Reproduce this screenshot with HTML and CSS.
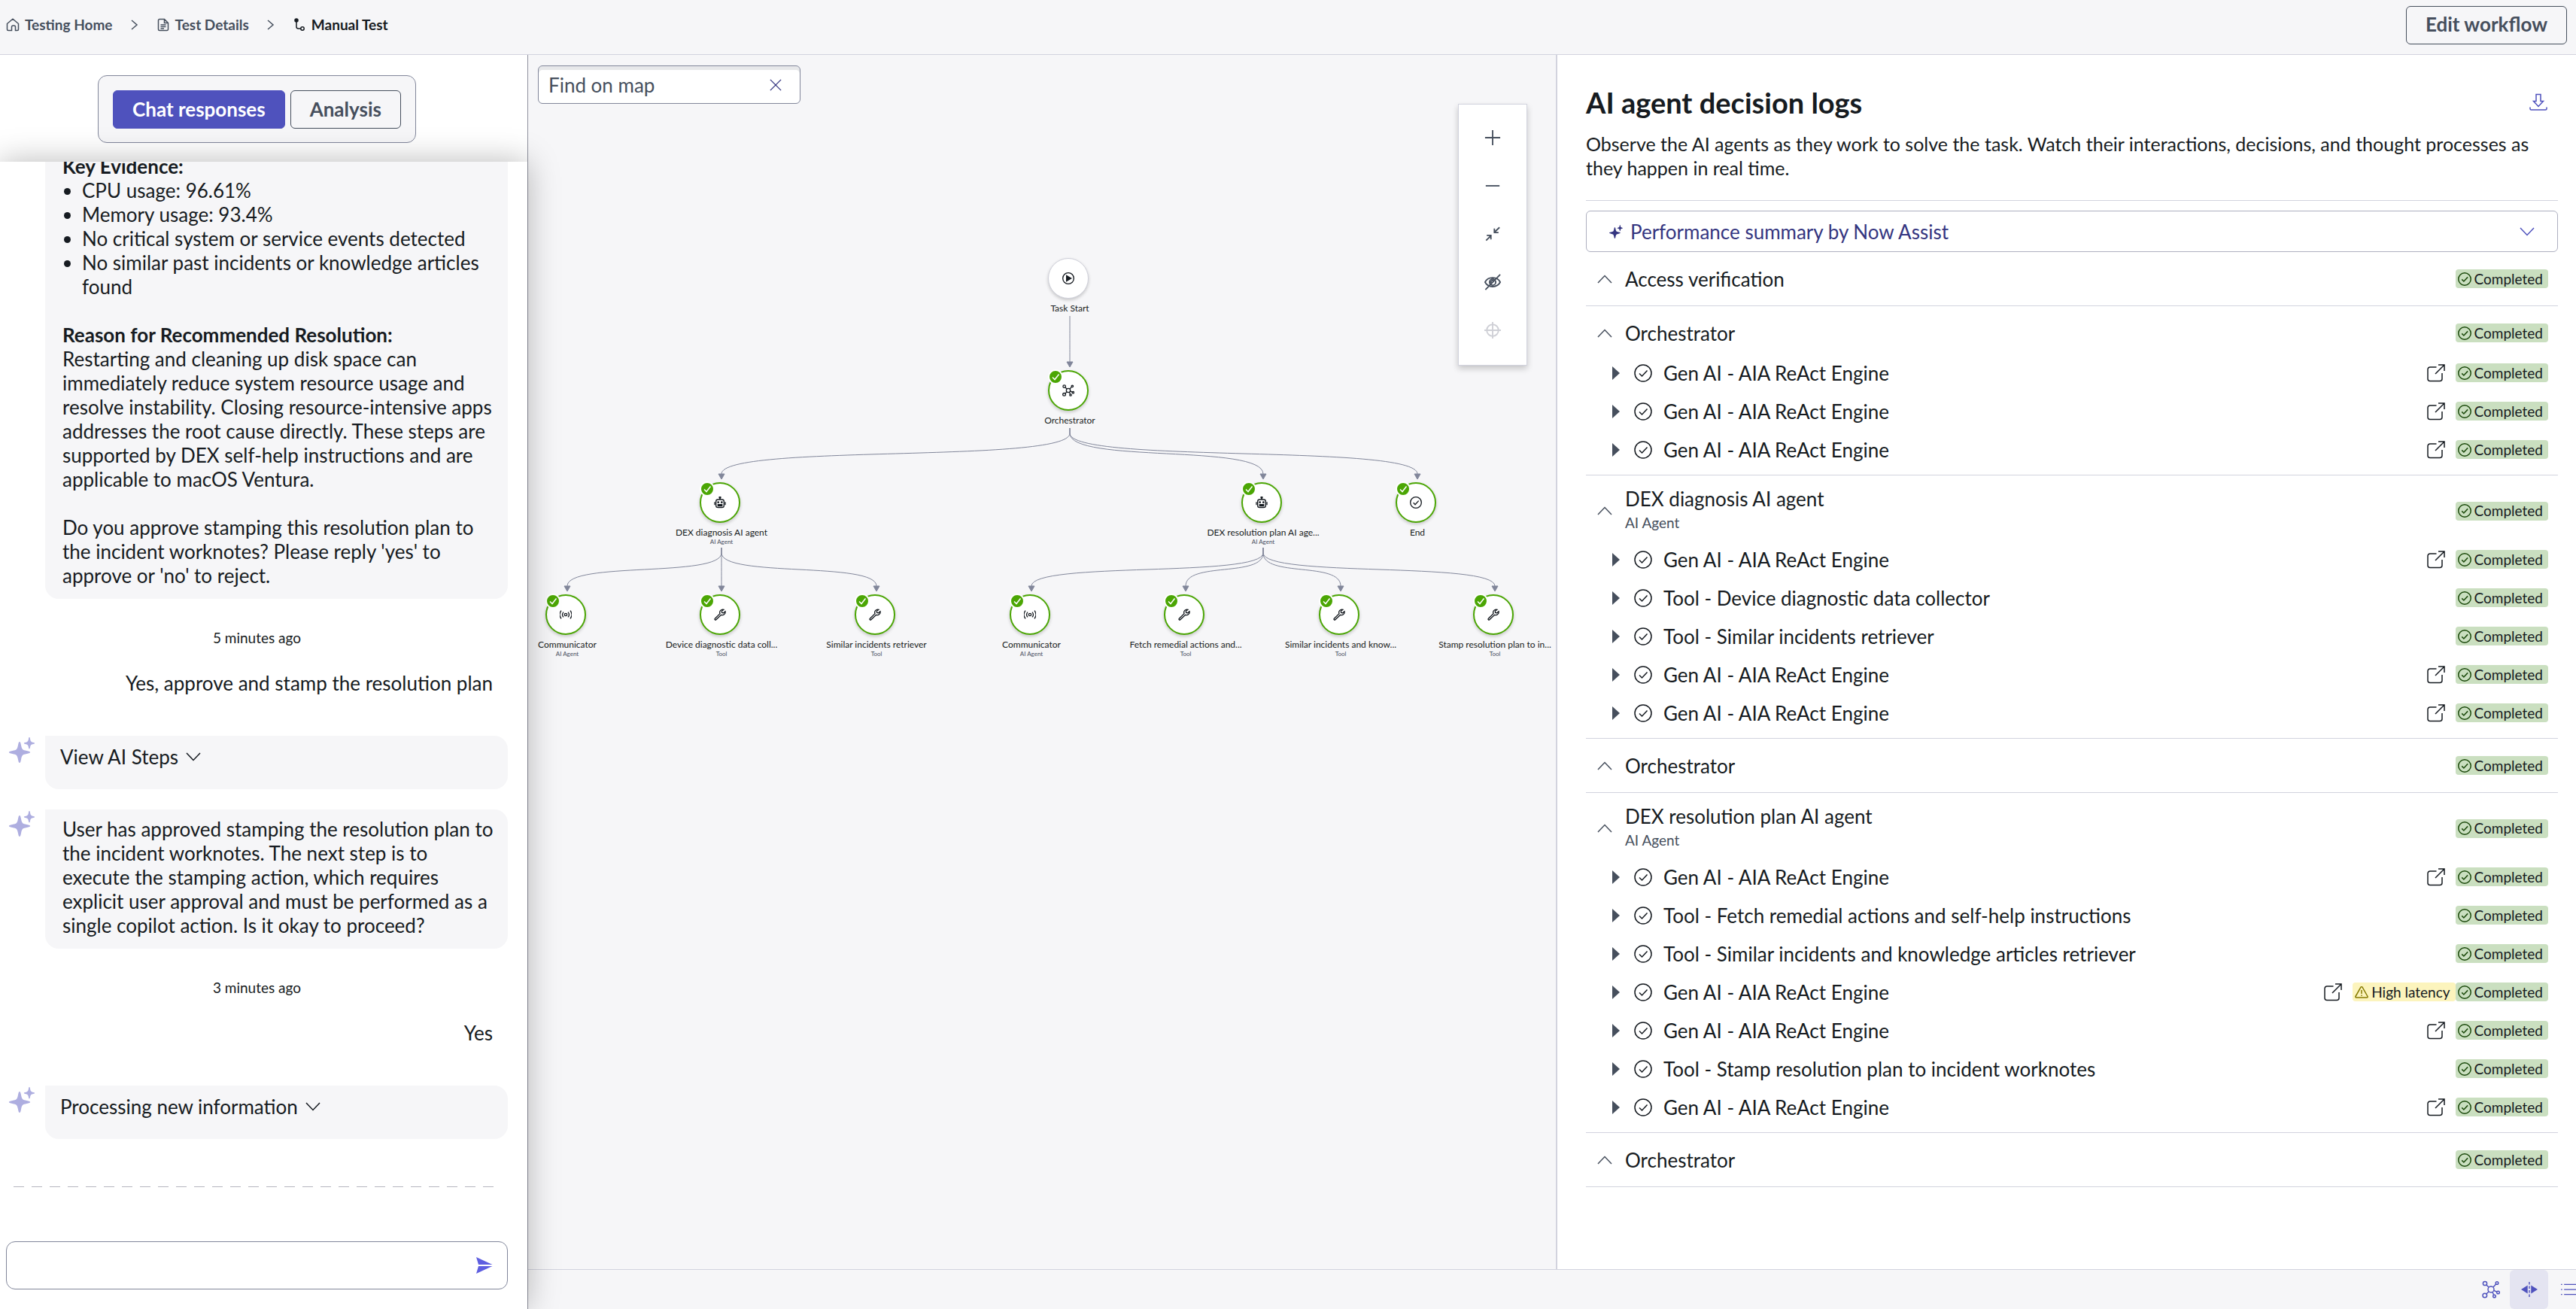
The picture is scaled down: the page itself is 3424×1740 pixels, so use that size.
FILE: index.html
```html
<!DOCTYPE html>
<html lang="en">
<head>
    <meta charset="UTF-8">
    <meta name="viewport" content="width=device-width, initial-scale=1.0">
    <title>Manual Test</title>
    <link rel="stylesheet" href="styles.css">
</head>
<body>
    <!-- Shared icons -->
    <svg class="sprite" aria-hidden="true">
        <symbol id="i-home" viewBox="0 0 18 18"><path d="M1.5 7.5 9 1.2l7.500 6.300V15a1.500 1.500 0 0 1-1.500 1.500h-2.500V12a2 2 0 0 0-2-2h-1a2 2 0 0 0-2 2v4.500H3A1.500 1.500 0 0 1 1.500 15z"/></symbol>
        <symbol id="i-doc" viewBox="0 0 18 18"><path d="M10.500 1.500H4A1.500 1.500 0 0 0 2.500 3v12A1.500 1.500 0 0 0 4 16.500h10a1.500 1.500 0 0 0 1.500-1.500V6.500zM10.500 1.500v5h5M5.500 9h7M5.500 11.500h7M5.500 14h4.500"/></symbol>
        <symbol id="i-branch" viewBox="0 0 18 18"><circle cx="5" cy="3" r="2" fill="currentColor"/><path d="M5 3v8.500a2.500 2.500 0 0 0 2.500 2.500H11"/><circle cx="13" cy="14" r="2.200"/></symbol>
        <symbol id="i-right" viewBox="0 0 10 14"><path d="m1 1 7 6-7 6"/></symbol>
        <symbol id="i-down" viewBox="0 0 20 12"><path d="m1 1 9 9.500L19 1"/></symbol>
        <symbol id="i-up" viewBox="0 0 20 12"><path d="m1 11 9-9.500 9 9.500"/></symbol>
        <symbol id="i-spark" viewBox="0 0 34 34"><path fill="currentColor" stroke="none" d="M14 6c1 0 1.300 1 2 4.500 1 5.500 2 6.500 7.500 7.500 3.500.7 4.500 1 4.500 2s-1 1.300-4.500 2c-5.500 1-6.500 2-7.500 7.500-.7 3.500-1 4.500-2 4.500s-1.300-1-2-4.500c-1-5.500-2-6.500-7.500-7.500C1 21.300 0 21 0 20s1-1.300 4.500-2c5.500-1 6.500-2 7.500-7.500C12.700 7 13 6 14 6zM27 0c.6 0 .8.600 1 2 .600 3.600 1.400 4.400 4.500 5 1 .200 1.500.400 1.500 1s-.500.800-1.500 1c-3.100.600-3.900 1.400-4.500 4.500-.200 1.300-.400 2-1 2s-.800-.700-1-2c-.600-3.100-1.400-3.900-4.500-4.500-1.200-.200-1.500-.400-1.500-1s.300-.800 1.500-1c3.100-.600 3.900-1.400 4.500-5 .200-1.400.400-2 1-2z"/></symbol>
        <symbol id="i-send" viewBox="0 0 22 22"><path fill="currentColor" stroke="none" d="M0 0 21.500 10H3zM3 12h18.500L0 22z"/></symbol>
        <symbol id="i-x" viewBox="0 0 18 18"><path d="m1 1 16 16M17 1 1 17"/></symbol>
        <symbol id="i-plus" viewBox="0 0 24 24"><path d="M12 1v22M1 12h22"/></symbol>
        <symbol id="i-minus" viewBox="0 0 24 24"><path d="M2 12h20"/></symbol>
        <symbol id="i-fit" viewBox="0 0 24 24"><path d="M22 2.500 14.500 9.500M14.500 4v6h6M2.500 21.500l7-7M3.500 14h6v6"/></symbol>
        <symbol id="i-eye" viewBox="0 0 24 24"><path d="M1 12c2-4 6-6.500 11-6.500S21 8 23 12c-2 4-6 6.500-11 6.500S3 16 1 12zM1.500 23 23 1"/><circle cx="12" cy="12" r="4.500"/><path d="M10 13.500a2.500 2.500 0 0 1 3.500-3.500"/></symbol>
        <symbol id="i-target" viewBox="0 0 24 24"><circle cx="12" cy="12" r="8.500"/><path d="M12 0v24M0 12h24"/></symbol>
        <symbol id="i-download" viewBox="0 0 24 24"><path d="M9 1.500h6v9h3.500L12 17.500 5.500 10.500H9zM1 18.500v2A1.500 1.500 0 0 0 2.500 22h19a1.500 1.500 0 0 0 1.500-1.500v-2"/></symbol>
        <symbol id="i-check" viewBox="0 0 24 24"><circle cx="12" cy="12" r="11"/><path d="m7 12.500 3.500 3.500L17.500 8.500"/></symbol>
        <symbol id="i-tri" viewBox="0 0 10 18"><path fill="currentColor" stroke="none" d="M0 0v18l10-9z"/></symbol>
        <symbol id="i-ext" viewBox="0 0 24 24"><path d="M12.500 4H4a3 3 0 0 0-3 3v12.500a3 3 0 0 0 3 3h13a3 3 0 0 0 3-3V12M15 1h8v8M22.500 1.500 11 13"/></symbol>
        <symbol id="i-warn" viewBox="0 0 18 18"><path d="M8 2.200a1.200 1.200 0 0 1 2 0l7 12.300a1 1 0 0 1-1 1.500H2a1 1 0 0 1-1-1.500zM9 6v5M9 12.500V14"/></symbol>
        <symbol id="i-hub" viewBox="0 0 24 24"><circle cx="12" cy="12" r="4"/><circle cx="4" cy="4" r="2.600"/><circle cx="20" cy="3.500" r="1.800"/><circle cx="3.800" cy="20" r="2.800"/><circle cx="16.500" cy="21" r="1.800"/><circle cx="21.500" cy="16" r="1.800"/><path d="m6 6 3.200 3.200M18.600 5l-3.700 4M5.800 18l3.400-3.200M15.700 19.200 14 15.500M19.800 15.200l-4-1.800"/></symbol>
        <symbol id="i-play" viewBox="0 0 24 24"><circle cx="12" cy="12" r="11"/><path fill="currentColor" d="M8.500 6.500v11l9-5.500z"/></symbol>
        <symbol id="i-bot" viewBox="0 0 24 24"><rect x="4" y="6" width="16" height="16" rx="4"/><path d="M12 2v4M1.500 11v6M22.500 11v6"/><circle cx="12" cy="2" r="1.500" fill="currentColor"/><circle cx="8.500" cy="11.500" r="1" fill="currentColor"/><circle cx="15.500" cy="11.500" r="1" fill="currentColor"/><rect x="8" y="16" width="8" height="3" fill="currentColor"/></symbol>
        <symbol id="i-radio" viewBox="0 0 24 24"><circle cx="12" cy="12" r="2.500"/><path d="M7.500 7a7.500 7.500 0 0 0 0 10M16.500 7a7.500 7.500 0 0 1 0 10M3 4a13 13 0 0 0 0 16M21 4a13 13 0 0 1 0 16"/></symbol>
        <symbol id="i-wrench" viewBox="0 0 24 24"><path d="M19.500 2a6 6 0 0 0-7.500 8L2 20a1.500 1.500 0 0 0 0 2.200 1.500 1.500 0 0 0 2.200 0L14.500 12.500a6 6 0 0 0 8-7L19 8.500l-3-.5-.5-3z"/></symbol>
        <symbol id="i-split" viewBox="0 0 24 24"><path fill="currentColor" stroke="none" d="M0 12l9.500-6v12zM24 12l-9.500-6v12z"/><path d="M12 1v22" stroke-dasharray="4 2"/></symbol>
        <symbol id="i-list" viewBox="0 0 24 24"><path d="M0 4h2M0 12h2M0 20h2M5 4h19M5 12h19M5 20h19"/></symbol>
    </svg>

    <header class="topbar">
        <nav class="breadcrumb" aria-label="Breadcrumb">
            <a href="#"><svg class="icon s18"><use href="#i-home"/></svg>Testing Home</a>
            <svg class="icon crumb-sep"><use href="#i-right"/></svg>
            <a href="#"><svg class="icon s18"><use href="#i-doc"/></svg>Test Details</a>
            <svg class="icon crumb-sep"><use href="#i-right"/></svg>
            <a href="#" class="current" aria-current="page"><svg class="icon s18"><use href="#i-branch"/></svg>Manual Test</a>
        </nav>
        <button class="btn">Edit workflow</button>
    </header>

    <main class="workspace">
        <section class="chat-panel">
            <div class="tabs">
                <div class="toggle">
                    <button class="btn btn-primary">Chat responses</button>
                    <button class="btn">Analysis</button>
                </div>
            </div>
            <div class="chat">
                <div class="messages">
                    <div class="message">
                        <div class="bubble">
                            <strong>Key Evidence:</strong>
                            <ul>
                                <li>CPU usage: 96.61%</li>
                                <li>Memory usage: 93.4%</li>
                                <li>No critical system or service events detected</li>
                                <li>No similar past incidents or knowledge articles found</li>
                            </ul>
                            <p><strong>Reason for Recommended Resolution:</strong><br>Restarting and cleaning up disk space can immediately reduce system resource usage and resolve instability. Closing resource-intensive apps addresses the root cause directly. These steps are supported by DEX self-help instructions and are applicable to macOS Ventura.</p>
                            <p>Do you approve stamping this resolution plan to the incident worknotes? Please reply 'yes' to approve or 'no' to reject.</p>
                        </div>
                    </div>
                    <time>5 minutes ago</time>
                    <p class="reply">Yes, approve and stamp the resolution plan</p>
                    <div class="message">
                        <svg class="icon spark"><use href="#i-spark"/></svg>
                        <div class="bubble steps"><button>View AI Steps <svg class="icon chevron"><use href="#i-down"/></svg></button></div>
                    </div>
                    <div class="message next">
                        <svg class="icon spark"><use href="#i-spark"/></svg>
                        <div class="bubble">User has approved stamping the resolution plan to the incident worknotes. The next step is to execute the stamping action, which requires explicit user approval and must be performed as a single copilot action. Is it okay to proceed?</div>
                    </div>
                    <time>3 minutes ago</time>
                    <p class="reply">Yes</p>
                    <div class="message">
                        <svg class="icon spark"><use href="#i-spark"/></svg>
                        <div class="bubble steps"><button>Processing new information <svg class="icon chevron"><use href="#i-down"/></svg></button></div>
                    </div>
                    <div class="dashes"></div>
                </div>
                <form class="composer">
                    <input type="text" aria-label="Message">
                    <button type="button" aria-label="Send"><svg class="icon s22"><use href="#i-send"/></svg></button>
                </form>
            </div>
        </section>

        <section class="map">
            <div id="canvas" class="canvas"></div>
            <div class="search">
                <input type="text" placeholder="Find on map" aria-label="Find on map">
                <button aria-label="Clear"><svg class="icon s16"><use href="#i-x"/></svg></button>
            </div>
            <div class="map-tools">
                <button aria-label="Zoom in"><svg class="icon s22"><use href="#i-plus"/></svg></button>
                <button aria-label="Zoom out"><svg class="icon s22"><use href="#i-minus"/></svg></button>
                <button aria-label="Fit to screen"><svg class="icon s22"><use href="#i-fit"/></svg></button>
                <button aria-label="Hide labels"><svg class="icon s22"><use href="#i-eye"/></svg></button>
                <button aria-label="Center" disabled><svg class="icon s22"><use href="#i-target"/></svg></button>
            </div>
        </section>

        <section class="logs">
            <div class="logs-title">
                <h1>AI agent decision logs</h1>
                <button aria-label="Download"><svg class="icon s24"><use href="#i-download"/></svg></button>
            </div>
            <p class="logs-intro">Observe the AI agents as they work to solve the task. Watch their interactions, decisions, and thought processes as they happen in real time.</p>
            <button class="summary">
                <svg class="icon s18"><use href="#i-spark"/></svg>
                <span>Performance summary by Now Assist</span>
                <svg class="icon chevron"><use href="#i-down"/></svg>
            </button>
            <div id="logList"></div>
        </section>

        <footer class="viewbar">
            <button aria-label="Map view"><svg class="icon s24"><use href="#i-hub"/></svg></button>
            <button class="active" aria-label="Split view"><svg class="icon s22"><use href="#i-split"/></svg></button>
            <button class="last" aria-label="List view"><svg class="icon s20"><use href="#i-list"/></svg></button>
        </footer>
    </main>

    <script>
        const nodes = [
            { id: 'start', x: 718, y: 297, icon: 'play', name: 'Task Start', pending: true },
            { id: 'orch', x: 718, y: 446, icon: 'hub', name: 'Orchestrator', parent: 'start' },
            { id: 'diag', x: 255, y: 595, icon: 'bot', name: 'DEX diagnosis AI agent', type: 'AI Agent', parent: 'orch' },
            { id: 'plan', x: 975, y: 595, icon: 'bot', name: 'DEX resolution plan AI age...', type: 'AI Agent', parent: 'orch' },
            { id: 'end', x: 1180, y: 595, icon: 'check', name: 'End', parent: 'orch' },
            { id: 'com1', x: 50, y: 744, icon: 'radio', name: 'Communicator', type: 'AI Agent', parent: 'diag' },
            { id: 'device', x: 255, y: 744, icon: 'wrench', name: 'Device diagnostic data coll...', type: 'Tool', parent: 'diag' },
            { id: 'similar', x: 461, y: 744, icon: 'wrench', name: 'Similar incidents retriever', type: 'Tool', parent: 'diag' },
            { id: 'com2', x: 667, y: 744, icon: 'radio', name: 'Communicator', type: 'AI Agent', parent: 'plan' },
            { id: 'fetch', x: 872, y: 744, icon: 'wrench', name: 'Fetch remedial actions and...', type: 'Tool', parent: 'plan' },
            { id: 'know', x: 1078, y: 744, icon: 'wrench', name: 'Similar incidents and know...', type: 'Tool', parent: 'plan' },
            { id: 'stamp', x: 1283, y: 744, icon: 'wrench', name: 'Stamp resolution plan to in...', type: 'Tool', parent: 'plan' }
        ];

        const react = { name: 'Gen AI - AIA ReAct Engine', link: true };
        const logs = [
            { name: 'Access verification', steps: [] },
            { name: 'Orchestrator', steps: [react, react, react] },
            { name: 'DEX diagnosis AI agent', type: 'AI Agent', steps: [
                react,
                { name: 'Tool - Device diagnostic data collector' },
                { name: 'Tool - Similar incidents retriever' },
                react,
                react
            ] },
            { name: 'Orchestrator', steps: [] },
            { name: 'DEX resolution plan AI agent', type: 'AI Agent', steps: [
                react,
                { name: 'Tool - Fetch remedial actions and self-help instructions' },
                { name: 'Tool - Similar incidents and knowledge articles retriever' },
                { name: 'Gen AI - AIA ReAct Engine', link: true, slow: true },
                react,
                { name: 'Tool - Stamp resolution plan to incident worknotes' },
                react
            ] },
            { name: 'Orchestrator', steps: [] }
        ];

        const icon = (name, cls) => `<svg class="icon ${cls}"><use href="#i-${name}"/></svg>`;
        const completed = `<span class="badge">${icon('check', 's18')}Completed</span>`;

        function renderMap() {
            let edges = '';
            nodes.filter(n => n.parent).forEach(n => {
                const p = nodes.find(m => m.id === n.parent);
                const x0 = p.x + 2, x1 = n.x + 2;
                const y0 = p.y + (p.type ? 60 : 50), y1 = n.y - 38;
                const bend = (y1 - y0 - 7) * 3 / 4;
                edges += `<path d="M${x0} ${y0}v7C${x0} ${y0 + 7 + bend} ${x1} ${y1 - bend} ${x1} ${y1}"/>
                    <path class="arrow" d="M${x1 - 4} ${y1}h8l-4 7z"/>`;
            });
            document.getElementById('canvas').innerHTML = `<svg class="edges">${edges}</svg>` + nodes.map(n => `
                <div class="node ${n.pending ? 'pending' : ''}" style="left:${n.x}px;top:${n.y}px">
                    <div class="node-circle">${icon(n.icon, 's16')}</div>
                    ${n.pending ? '' : '<svg class="node-check" viewBox="0 0 20 20"><circle cx="10" cy="10" r="9"/><path d="m6 10.500 3 3 5.500-7"/></svg>'}
                    <div class="node-name">${n.name}</div>
                    ${n.type ? `<div class="node-type">${n.type}</div>` : ''}
                </div>`).join('');
        }

        function renderLogs() {
            document.getElementById('logList').innerHTML = logs.map(log => `
                <div class="log">
                    <div class="log-head ${log.type ? 'tall' : ''}">
                        <button aria-label="Collapse">${icon('up', 'chevron')}</button>
                        <div class="log-name">${log.name}${log.type ? `<small>${log.type}</small>` : ''}</div>
                        ${completed}
                    </div>
                    ${log.steps.map(s => `
                    <div class="step">
                        <button aria-label="Expand">${icon('tri', 'tri')}</button>
                        ${icon('check', 's24')}
                        <span class="step-name">${s.name}</span>
                        ${s.link ? `<a href="#" aria-label="Open">${icon('ext', 's24')}</a>` : ''}
                        ${s.slow ? `<span class="badge warn">${icon('warn', 's18')}High latency</span>` : ''}
                        ${completed}
                    </div>`).join('')}
                </div>`).join('');
        }

        renderMap();
        renderLogs();
    </script>
</body>
</html>
```
FILE: styles.css
```css
* {
    box-sizing: border-box;
}
body {
    font-family: Lato, "Open Sans", sans-serif;
    font-size: 26px;
    line-height: 32px;
    color: #161b21;
    background-color: #f6f6f8;
    margin: 0;
    height: 100vh;
    display: flex;
    flex-direction: column;
    overflow: hidden;
}
p, h1, ul {
    margin: 0;
    padding: 0;
}
button, input {
    font: inherit;
    color: inherit;
}
button {
    background: none;
    border: none;
    padding: 0;
    cursor: pointer;
}
a {
    color: inherit;
    text-decoration: none;
}

/* Icons */
.sprite {
    display: none;
}
.icon {
    display: block;
    flex: none;
    fill: none;
    stroke: currentColor;
    stroke-width: 1.5;
}
.s16 { width: 16px; height: 16px; }
.s18 { width: 18px; height: 18px; }
.s20 { width: 20px; height: 20px; }
.s22 { width: 22px; height: 22px; }
.s24 { width: 24px; height: 24px; }
.chevron { width: 20px; height: 12px; }

/* Top bar */
.topbar {
    display: flex;
    align-items: center;
    justify-content: space-between;
    height: 73px;
    padding: 0 12px 6px 8px;
    border-bottom: 1px solid #d2d3de;
}
.breadcrumb {
    display: flex;
    align-items: center;
    gap: 24px;
    font-size: 19px;
    font-weight: bold;
    color: #464f5d;
}
.breadcrumb a {
    display: flex;
    align-items: center;
    gap: 7px;
}
.breadcrumb .current {
    color: #161b21;
}
.crumb-sep {
    width: 10px;
    height: 14px;
}
.btn {
    height: 51px;
    padding: 0 25px 2px;
    border: 1px solid #464f5d;
    border-radius: 6px;
    font-weight: bold;
    color: #464f5d;
}
.btn-primary {
    background-color: #4f52bd;
    border-color: #4f52bd;
    color: white;
}

.workspace {
    flex: 1;
    min-height: 0;
    display: grid;
    grid-template-columns: 702fr 1366fr 1356fr;
    grid-template-rows: minmax(0, 1fr) 53px;
}

/* Chat */
.chat-panel {
    grid-row: 1 / 3;
    display: flex;
    flex-direction: column;
    min-height: 0;
    background-color: white;
    border-right: 1px solid #8f919e;
    position: relative;
    z-index: 1;
}
.tabs {
    display: flex;
    justify-content: center;
    padding: 27px 18px 25px 0;
}
.toggle {
    display: flex;
    gap: 7px;
    padding: 19px 19px 18px;
    background-color: #f6f6f8;
    border: 1px solid #81869a;
    border-radius: 12px;
}
.chat {
    flex: 1;
    min-height: 0;
    display: flex;
    flex-direction: column;
    padding: 0 26px 26px 8px;
    background-color: white;
    box-shadow: 0 0 40px rgba(0, 0, 0, 0.28);
}
.messages {
    flex: 1;
    min-height: 0;
    display: flex;
    flex-direction: column;
    justify-content: flex-end;
    overflow: hidden;
}
.message {
    display: flex;
    justify-content: flex-end;
    flex: none;
    gap: 14px;
    padding-left: 4px;
}
.message.next {
    margin-top: 27px;
}
.bubble {
    width: 615px;
    padding: 10px 16px 15px 23px;
    background-color: #f6f6f8;
    border-radius: 0 18px 18px 18px;
}
.bubble ul {
    padding-left: 26px;
}
.bubble p {
    margin-top: 32px;
}
.steps {
    padding: 12px 20px 27px;
}
.steps button {
    display: flex;
    align-items: center;
    gap: 10px;
}
.spark {
    width: 34px;
    height: 34px;
    margin-top: 2px;
    color: #aeaee0;
}
time {
    flex: none;
    margin-top: 40px;
    font-size: 19px;
    line-height: 24px;
    text-align: center;
}
.reply {
    flex: none;
    margin: 32px 20px 54px 0;
    text-align: right;
}
.dashes {
    flex: none;
    height: 1px;
    margin: 63px 10px 72px;
    background: repeating-linear-gradient(90deg, #b5b5c0 0 14px, transparent 14px 24px);
}
.composer {
    display: flex;
    align-items: center;
    flex: none;
    height: 64px;
    padding: 0 19px;
    border: 1px solid #81869a;
    border-radius: 12px;
}
.composer input {
    flex: 1;
    border: none;
    outline: none;
    background: none;
}
.composer button {
    color: #5f5fe0;
}

/* Map */
.map {
    position: relative;
    overflow: hidden;
}
.canvas {
    position: absolute;
    inset: 0;
}
.edges {
    width: 100%;
    height: 100%;
    fill: none;
    stroke: #81869a;
}
.edges .arrow {
    fill: #81869a;
}
.node {
    position: absolute;
    width: 0;
    color: #161b21;
}
.node-circle {
    width: 54px;
    height: 54px;
    margin: -27px 0 0 -27px;
    display: flex;
    align-items: center;
    justify-content: center;
    background-color: white;
    border: 2px solid #4ba604;
    border-radius: 50%;
    box-shadow: 0 2px 4px rgba(0, 0, 0, 0.2);
}
.node-circle .icon {
    stroke-width: 2;
}
.pending .node-circle {
    border: 1px solid #cfd0da;
}
.node-check {
    position: absolute;
    left: -27px;
    top: -28px;
    width: 20px;
    height: 20px;
    fill: #4ba604;
    stroke: white;
    stroke-width: 2;
}
.node-check path {
    fill: none;
    stroke-width: 1.5;
}
.node-name, .node-type {
    width: 200px;
    margin-left: -98px;
    text-align: center;
    white-space: nowrap;
}
.node-name {
    margin-top: 5px;
    font-size: 12px;
    line-height: 16px;
}
.node-type {
    font-size: 8px;
    line-height: 8px;
    color: #464f5d;
}
.search {
    position: absolute;
    left: 13px;
    top: 14px;
    display: flex;
    align-items: center;
    width: 349px;
    height: 51px;
    padding: 0 24px 0 13px;
    background-color: white;
    border: 1px solid #81869a;
    border-radius: 6px;
    box-shadow: inset 0 5px 0 #e7e8ea;
}
.search input {
    flex: 1;
    min-width: 0;
    padding: 0;
    border: none;
    outline: none;
    background: none;
}
.search input::placeholder {
    color: #464f5d;
    opacity: 1;
}
.search button {
    color: #343580;
}
.map-tools {
    position: absolute;
    right: 38px;
    top: 65px;
    display: flex;
    flex-direction: column;
    width: 92px;
    padding: 12px 0 14px;
    background-color: white;
    border: 1px solid #d2d3de;
    box-shadow: 0 4px 8px rgba(0, 0, 0, 0.2);
    color: #464f5d;
}
.map-tools button {
    display: flex;
    align-items: center;
    justify-content: center;
    height: 64px;
}
.map-tools .icon {
    stroke-width: 2;
}
.map-tools button:disabled {
    color: #cfd0d6;
}

/* Decision logs */
.logs {
    padding: 40px 24px 0 38px;
    background-color: white;
    border-left: 2px solid #d2d3de;
    overflow: hidden;
}
.logs-title {
    display: flex;
    align-items: center;
    justify-content: space-between;
    padding-right: 14px;
}
.logs-title button {
    color: #4f52bd;
}
h1 {
    font-size: 38px;
    line-height: 46px;
}
.logs-intro {
    padding: 16px 0 27px;
    border-bottom: 1px solid #d2d3de;
    font-size: 25px;
}
.summary {
    display: flex;
    align-items: center;
    gap: 10px;
    width: 100%;
    height: 55px;
    margin-top: 13px;
    padding: 0 30px;
    border: 1px solid #aeb0c0;
    border-radius: 6px;
    color: #343580;
}
.summary .chevron {
    margin-left: auto;
    color: #4f52bd;
}
.log {
    padding: 8px 0;
    border-bottom: 1px solid #d2d3de;
}
.log-head, .step {
    display: flex;
    align-items: center;
    padding-right: 13px;
}
.log-head {
    height: 55px;
    padding-left: 15px;
}
.log-head.tall {
    height: 78px;
}
.log-head button {
    color: #464f5d;
}
.log-name {
    flex: 1;
    margin-left: 17px;
}
.log-name small {
    display: block;
    font-size: 19px;
    color: #464f5d;
}
.step {
    height: 51px;
    padding-left: 35px;
}
.step button {
    margin-right: 19px;
    color: #464f5d;
}
.tri {
    width: 10px;
    height: 18px;
}
.step-name {
    flex: 1;
    margin-left: 15px;
}
.step a {
    margin-right: 14px;
}
.badge {
    display: flex;
    align-items: center;
    gap: 4px;
    height: 25px;
    padding: 0 7px 0 3px;
    border-radius: 4px;
    background-color: #cadfc0;
    font-size: 19px;
}
.badge .icon {
    color: #1c4a0c;
    stroke-width: 2;
}
.badge.warn {
    background-color: #fcf4bd;
}
.badge.warn .icon {
    color: #857a00;
    stroke-width: 1.5;
}

/* View switcher */
.viewbar {
    grid-column: 2 / 4;
    display: flex;
    justify-content: flex-end;
    border-top: 1px solid #d2d3de;
    overflow: hidden;
    color: #4f52bd;
}
.viewbar button {
    display: flex;
    align-items: center;
    justify-content: center;
    width: 51px;
}
.viewbar .active {
    background-color: #e4e4f1;
    border-radius: 6px;
}
.viewbar .last {
    justify-content: flex-end;
    width: 37px;
}
```
